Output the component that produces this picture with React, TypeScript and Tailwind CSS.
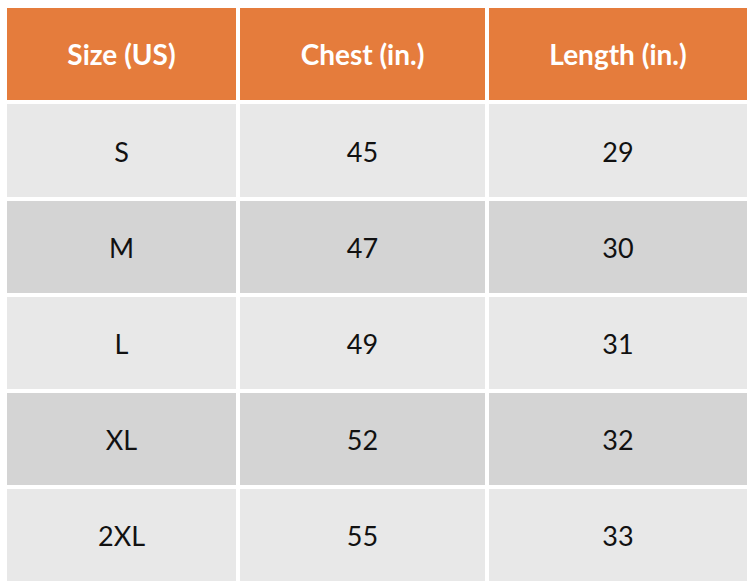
const headers = ['Size (US)', 'Chest (in.)', 'Length (in.)'];

const rows = [
  ['S', '45', '29'],
  ['M', '47', '30'],
  ['L', '49', '31'],
  ['XL', '52', '32'],
  ['2XL', '55', '33'],
];

export default function App() {
  return (
    <div className="w-[752px] h-[588px] bg-white pl-[7px] pt-[8px] font-['Lato','Liberation_Sans',sans-serif]">
      <div className="grid grid-cols-[229px_245px_258px] grid-rows-[92px_93px_92px_92px_92px_92px] gap-[4px]">
        {headers.map((h) => (
          <div
            key={h}
            className="flex items-center justify-center bg-[#e57c3c] text-white text-[28px] font-bold"
          >
            {h}
          </div>
        ))}

        {rows.map((row, i) =>
          row.map((cell, j) => (
            <div
              key={`${i}-${j}`}
              className={`flex items-center justify-center pt-[3px] text-[27px] text-[#111] ${
                i % 2 === 0 ? 'bg-[#e8e8e8]' : 'bg-[#d4d4d4]'
              }`}
            >
              {cell}
            </div>
          )),
        )}
      </div>
    </div>
  );
}
